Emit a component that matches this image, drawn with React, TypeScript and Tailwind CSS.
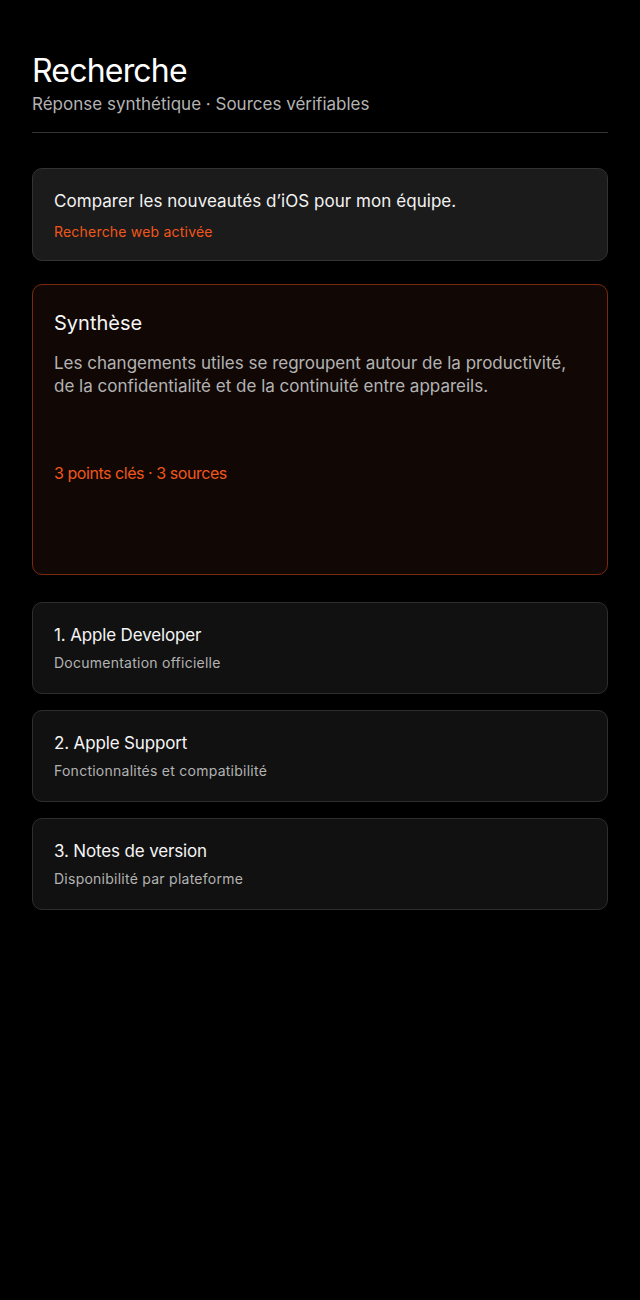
import React from "react";

const sources = [
  { t: "1. Apple Developer", s: "Documentation officielle" },
  { t: "2. Apple Support", s: "Fonctionnalités et compatibilité" },
  { t: "3. Notes de version", s: "Disponibilité par plateforme" },
];

export default function App() {
  return (
    <div
      className="min-h-[1300px] w-full bg-black text-white px-8 pt-[51px]"
      style={{ fontFamily: "Inter, 'Noto Sans', sans-serif" }}
    >
      <h1 className="text-[32px] leading-[40px] tracking-[-0.8px] font-normal">Recherche</h1>
      <p className="text-[17px] leading-[24px] text-[#b3b3b3] mt-[1px]">
        Réponse synthétique · Sources vérifiables
      </p>
      <div className="h-px bg-[#333333] mt-[16px]" />

      <div className="mt-[35px] rounded-[10px] border border-[#333333] bg-[#1b1b1b] px-[21px] pt-[19px] pb-[18px]">
        <p className="text-[17px] leading-[26px] text-[#f2f2f2] tracking-[0.05px]">
          Comparer les nouveautés d’iOS pour mon équipe.
        </p>
        <p className="text-[14px] leading-[20px] text-[#f0561a] mt-[8px] tracking-[0.2px]">Recherche web activée</p>
      </div>

      <div className="mt-[23px] rounded-[10px] border border-[#7a2a0c] bg-[#110805] px-[21px] pt-[24px] h-[291px]">
        <h2 className="text-[20px] leading-[28px] text-[#f5f5f5]">Synthèse</h2>
        <p className="text-[17px] leading-[23px] text-[#b3b3b3] mt-[15px]">
          Les changements utiles se regroupent autour de la productivité, de la confidentialité et de la continuité entre
          appareils.
        </p>
        <p className="text-[16px] leading-[24px] text-[#f0561a] mt-[63px] tracking-[-0.45px]">3 points clés · 3 sources</p>
      </div>

      <div className="mt-[27px] flex flex-col gap-[16px]">
        {sources.map((x) => (
          <div
            key={x.t}
            className="h-[92px] rounded-[10px] border border-[#2e2e2e] bg-[#111111] px-[21px] pt-[20px]"
          >
            <p className="text-[17px] leading-[24px] text-[#f5f5f5] tracking-[-0.15px]">{x.t}</p>
            <p className="text-[14px] leading-[20px] text-[#b3b3b3] mt-[6px] tracking-[0.25px]">{x.s}</p>
          </div>
        ))}
      </div>
    </div>
  );
}
